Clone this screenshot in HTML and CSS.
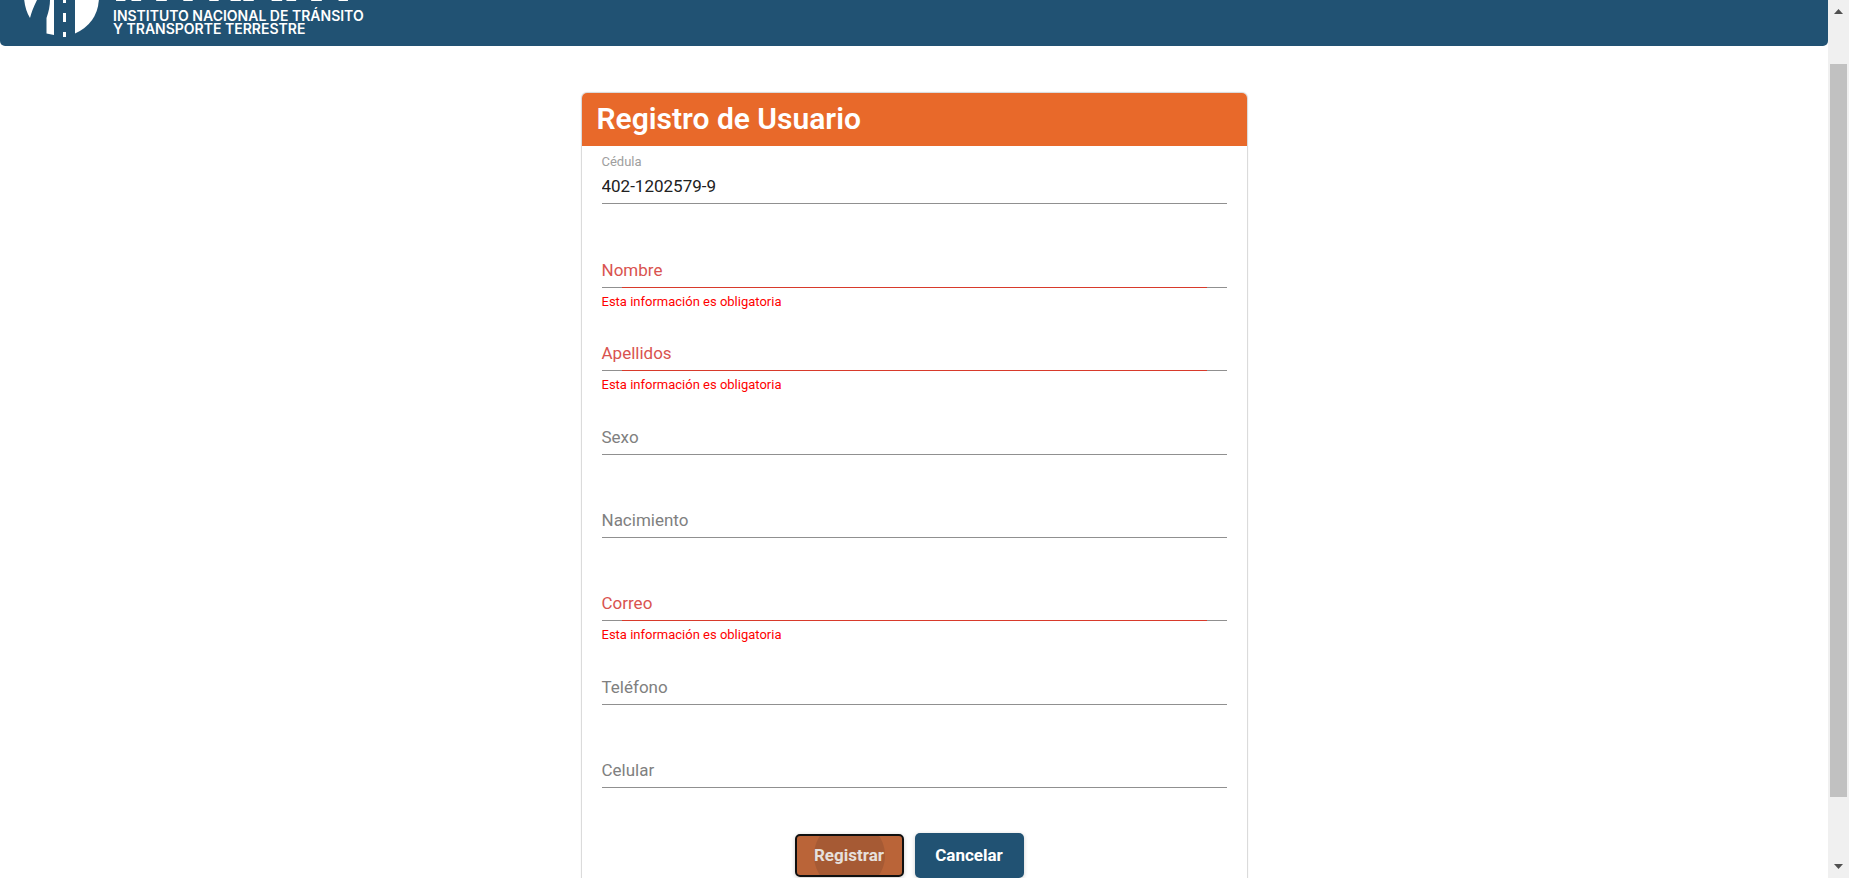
FILE: index.html
```html
<!DOCTYPE html>
<html lang="es">
<head>
<meta charset="utf-8">
<title>Registro de Usuario</title>
<link rel="stylesheet" href="styles.css">
</head>
<body>
<div class="viewport">
  <div class="page">
    <header class="toolbar">
      <svg class="emblem" viewBox="0 0 76 76" aria-hidden="true">
        <path fill="#fff" d="M0 36Q4 10 30 1Q20 20 13 38Q8 48 6 56Q1 48 0 36ZM30 1V73L22.500 71.500V56Q26 46 26 38Z"/>
        <path fill="#fff" d="M51 1V71.500Q74 61 75 36Q74 10 51 1Z"/>
        <path fill="#fff" d="M39 32h3v9h-3zM39 51h3v9h-3zM39 70h3v5h-3z"/>
      </svg>
      <div class="brand">
        <span class="brand-name">INTRANT</span>
        <span class="brand-line">INSTITUTO NACIONAL DE TRÁNSITO</span>
        <span class="brand-line">Y TRANSPORTE TERRESTRE</span>
      </div>
    </header>
    <main class="content">
      <form class="card" novalidate>
        <h1 class="card-title">Registro de Usuario</h1>
        <div class="fields">
          <div class="field filled"><label for="cedula">Cédula</label><input id="cedula" type="text" value="402-1202579-9"></div>
          <div class="field invalid"><label for="nombre">Nombre</label><input id="nombre" type="text"><p class="error">Esta información es obligatoria</p></div>
          <div class="field invalid"><label for="apellidos">Apellidos</label><input id="apellidos" type="text"><p class="error">Esta información es obligatoria</p></div>
          <div class="field"><label for="sexo">Sexo</label><input id="sexo" type="text"></div>
          <div class="field"><label for="nacimiento">Nacimiento</label><input id="nacimiento" type="text"></div>
          <div class="field invalid"><label for="correo">Correo</label><input id="correo" type="email"><p class="error">Esta información es obligatoria</p></div>
          <div class="field"><label for="telefono">Teléfono</label><input id="telefono" type="tel"></div>
          <div class="field"><label for="celular">Celular</label><input id="celular" type="tel"></div>
        </div>
        <div class="actions">
          <button class="btn btn-primary" type="button">Registrar</button>
          <button class="btn btn-secondary" type="button">Cancelar</button>
        </div>
      </form>
    </main>
  </div>
  <div class="scrollbar" aria-hidden="true">
    <svg class="arrow" viewBox="0 0 21 21"><path fill="#505050" d="M6 14h9L10.500 9z"/></svg>
    <div class="track"><div class="thumb"></div></div>
    <svg class="arrow" viewBox="0 0 21 21"><path fill="#505050" d="M6 7h9L10.500 12z"/></svg>
  </div>
</div>
</body>
</html>
```
FILE: styles.css
```css
* { box-sizing: border-box; }

body {
  margin: 0;
  background: #fff;
  color: #212121;
  font-family: Roboto, "Liberation Sans", sans-serif;
  overflow: hidden;
}

.viewport { display: flex; height: 100vh; }
.page { flex: 1; min-width: 0; overflow: hidden; }

.toolbar {
  display: flex;
  align-items: flex-end;
  gap: 13px;
  height: 46px;
  padding: 0 24px 8px;
  background: #215273;
  border-radius: 0 0 5px 5px;
  overflow: hidden;
}
.emblem { flex: none; width: 76px; height: 76px; }
.brand {
  display: flex;
  flex-direction: column;
  padding-bottom: 3px;
  color: #fff;
  font-family: Inter, "Open Sans", sans-serif;
  font-weight: 800;
  white-space: nowrap;
}
.brand-name { font-size: 54px; line-height: 54px; }
.brand-line { font-size: 14px; line-height: 13px; font-weight: 600; }

.content { display: flex; justify-content: center; padding: 47px 20px 0; }

.card {
  width: 100%;
  max-width: 665px;
  border-radius: 5px;
  box-shadow: 0 0 1px 1px rgba(0, 0, 0, 0.16);
}
.card-title {
  margin: 0;
  padding: 0 15px 2px;
  border-radius: 5px 5px 0 0;
  background: #e8692a;
  color: #fff;
  font-size: 30px;
  line-height: 51px;
  font-weight: 600;
}

.fields {
  display: grid;
  grid-template-rows: 84px 83px 84px 83px 83px 84px 83px 83px;
  padding: 0 20px;
}
.field { position: relative; padding-top: 24px; }
.field input {
  display: block;
  width: 100%;
  height: 34px;
  padding: 0 0 2px;
  border: 0;
  border-bottom: 1px solid #909090;
  background: none;
  outline: none;
  color: #212121;
  font: 400 17px/30px Roboto, "Liberation Sans", sans-serif;
}
.field label {
  position: absolute;
  top: 28px;
  left: 0;
  color: #808080;
  font-size: 17px;
  line-height: 24px;
}
.filled label { top: 8px; color: #9e9e9e; font-size: 13px; line-height: 16px; }
.invalid label { color: #d9534f; }
.invalid input {
  border-bottom-color: transparent;
  background: linear-gradient(90deg, #909090 20px, #d83a2b 20px, #d83a2b calc(100% - 20px), #909090 calc(100% - 20px)) left bottom / 100% 1px no-repeat border-box;
}
.error { margin: 6px 0 0; color: #f00; font-size: 13px; line-height: 16px; }

.actions { display: flex; justify-content: center; gap: 11px; padding: 20px 10px 24px 0; }
.btn {
  width: 109px;
  height: 45px;
  padding: 0 0 1px;
  border: 0;
  border-radius: 5px;
  color: #fff;
  font: 700 17px/24px Roboto, "Liberation Sans", sans-serif;
  box-shadow: 0 1px 4px rgba(0, 0, 0, 0.2);
}
.btn-primary {
  background: radial-gradient(circle, #a65a34 35px, #ba6438 36px);
  border: 2px solid #101010;
  height: 43px;
  margin-top: 1px;
  color: #e6e0dd;
}
.btn-secondary { background: #215273; }

.scrollbar {
  display: flex;
  flex-direction: column;
  flex: none;
  width: 21px;
  background: #f0f0f0;
}
.arrow { display: block; width: 21px; height: 21px; flex: none; }
.track { flex: 1; padding: 43px 2px 60px; }
.thumb { height: 100%; background: #c1c1c1; }
```
